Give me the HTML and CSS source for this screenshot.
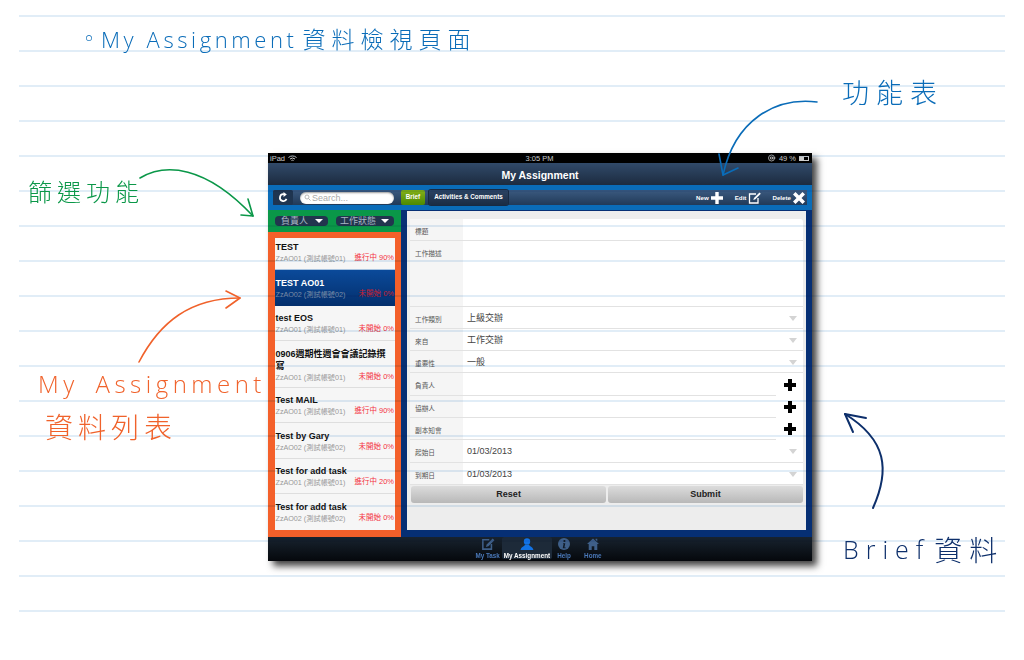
FILE: index.html
```html
<!DOCTYPE html>
<html lang="en">
<head>
    <meta charset="UTF-8">
    <meta name="viewport" content="width=device-width, initial-scale=1.0">
    <title>My Assignment</title>
    <link rel="stylesheet" href="styles.css">
</head>
<body>
<div class="sheet">
    <div class="ipad">
        <div class="status-bar">
            <div class="status-left">iPad
                <svg width="9" height="7" viewBox="0 0 18 14"><path d="M1 5a12 12 0 0 1 16 0M4 8a8 8 0 0 1 10 0M7 11a3.500 3.500 0 0 1 4 0" fill="none" stroke="#ccc" stroke-width="2"/></svg>
            </div>
            <div class="status-time">3:05 PM</div>
            <div class="status-right">
                <svg width="8" height="8" viewBox="0 0 16 16"><circle cx="7" cy="8" r="6" fill="none" stroke="#ccc" stroke-width="1.500"/><path d="M5 6h4v4H5zM9 8h6" fill="none" stroke="#ccc" stroke-width="1.500"/></svg>
                <span>49 %</span>
                <span class="battery"><span class="battery-fill"></span></span>
            </div>
        </div>
        <div class="title-bar">My Assignment</div>
        <div class="toolbar-wrap">
            <div class="toolbar">
                <div class="refresh-btn">
                    <svg width="11" height="11" viewBox="0 0 20 20"><path d="M15.500 12.500A6.200 6.200 0 1 1 11 4.100" fill="none" stroke="#fff" stroke-width="3.200"/><path d="M10 0l6 4.500-6 4.500z" fill="#fff"/></svg>
                </div>
                <div class="search-box">
                    <svg width="7" height="7" viewBox="0 0 14 14"><circle cx="6" cy="6" r="4" fill="none" stroke="#aaa" stroke-width="1.600"/><path d="M9 9l4 4" stroke="#aaa" stroke-width="1.800"/></svg>
                    <span>Search...</span>
                </div>
                <div class="tab-btn tab-green">Brief</div>
                <div class="tab-btn tab-dark">Activities &amp; Comments</div>
                <div class="actions">
                    <div class="action action-new">New
                        <svg width="12" height="12" viewBox="0 0 12 12"><path d="M4.300 0h3.400v4.300H12v3.400H7.700V12H4.300V7.700H0V4.300h4.300z" fill="#fff"/></svg>
                    </div>
                    <div class="action action-edit">Edit
                        <svg width="13" height="12" viewBox="0 0 13 12"><path d="M8 2H1.500v9h8.500V6" fill="none" stroke="#fff" stroke-width="1.300"/><path d="M11.500 0.500l1.300 1.300-5.500 5.500-2 .7.700-2z" fill="#fff"/></svg>
                    </div>
                    <div class="action">Delete
                        <svg width="12" height="12" viewBox="0 0 12 12"><path d="M2.500 0L6 3.500 9.500 0 12 2.500 8.500 6 12 9.500 9.500 12 6 8.500 2.500 12 0 9.500 3.500 6 0 2.500z" fill="#fff"/></svg>
                    </div>
                </div>
            </div>
        </div>
        <div class="main">
            <div class="left-col">
                <div class="filter-bar">
                    <div class="filter-pill filter-owner">負責人<i class="pill-arrow"></i></div>
                    <div class="filter-pill filter-state">工作狀態<i class="pill-arrow"></i></div>
                </div>
                <div class="list-frame">
                    <div class="task-list">
                        <div class="task task-first">
                            <div class="task-title">TEST</div>
                            <div class="task-meta"><span class="task-user">ZzAO01 (測試帳號01)</span><span class="task-state">進行中 90%</span></div>
                        </div>
                        <div class="task task-active">
                            <div class="task-title">TEST AO01</div>
                            <div class="task-meta"><span class="task-user">ZzAO02 (測試帳號02)</span><span class="task-state">未開始 0%</span></div>
                        </div>
                        <div class="task">
                            <div class="task-title">test EOS</div>
                            <div class="task-meta"><span class="task-user">ZzAO01 (測試帳號01)</span><span class="task-state">未開始 0%</span></div>
                        </div>
                        <div class="task task-tall">
                            <div class="task-title">0906週期性週會會議記錄撰寫</div>
                            <div class="task-meta"><span class="task-user">ZzAO01 (測試帳號01)</span><span class="task-state">未開始 0%</span></div>
                        </div>
                        <div class="task">
                            <div class="task-title">Test MAIL</div>
                            <div class="task-meta"><span class="task-user">ZzAO01 (測試帳號01)</span><span class="task-state">進行中 90%</span></div>
                        </div>
                        <div class="task">
                            <div class="task-title">Test by Gary</div>
                            <div class="task-meta"><span class="task-user">ZzAO02 (測試帳號02)</span><span class="task-state">未開始 0%</span></div>
                        </div>
                        <div class="task">
                            <div class="task-title">Test for add task</div>
                            <div class="task-meta"><span class="task-user">ZzAO01 (測試帳號01)</span><span class="task-state">進行中 20%</span></div>
                        </div>
                        <div class="task task-last">
                            <div class="task-title">Test for add task</div>
                            <div class="task-meta"><span class="task-user">ZzAO02 (測試帳號02)</span><span class="task-state">未開始 0%</span></div>
                        </div>
                    </div>
                </div>
            </div>
            <div class="detail-frame">
                <div class="detail">
                    <div class="form-card">
                        <div class="row row-title"><div class="row-label">標題</div><div class="row-value"></div></div>
                        <div class="row row-desc"><div class="row-label">工作描述</div><div class="row-value"></div></div>
                        <div class="row"><div class="row-label">工作類別</div><div class="row-value">上級交辦<i class="select-arrow"></i></div></div>
                        <div class="row"><div class="row-label">來自</div><div class="row-value">工作交辦<i class="select-arrow"></i></div></div>
                        <div class="row"><div class="row-label">重要性</div><div class="row-value">一般<i class="select-arrow"></i></div></div>
                        <div class="row row-person"><div class="row-label">負責人</div><div class="row-value"></div><div class="row-add"><i class="plus"></i></div></div>
                        <div class="row row-person"><div class="row-label">協辦人</div><div class="row-value"></div><div class="row-add"><i class="plus"></i></div></div>
                        <div class="row row-person"><div class="row-label">副本知會</div><div class="row-value"></div><div class="row-add"><i class="plus"></i></div></div>
                        <div class="row"><div class="row-label">起始日</div><div class="row-value">01/03/2013<i class="select-arrow"></i></div></div>
                        <div class="row"><div class="row-label">到期日</div><div class="row-value">01/03/2013<i class="select-arrow"></i></div></div>
                    </div>
                    <div class="form-buttons">
                        <div class="form-btn">Reset</div>
                        <div class="form-btn">Submit</div>
                    </div>
                </div>
            </div>
        </div>
        <div class="tab-bar">
            <div class="tab">
                <svg width="16" height="14" viewBox="0 0 16 14"><path d="M9.500 2H2v11h10V7" fill="none" stroke="#3f5f88" stroke-width="1.800"/><path d="M13.500 0.500l2 2-7 7-3 1 1-3z" fill="#3f5f88"/></svg>
                <span>My Task</span>
            </div>
            <div class="tab tab-on">
                <svg width="16" height="14" viewBox="0 0 16 14"><circle cx="8" cy="4" r="3.700" fill="#1273e6"/><path d="M5.500 7.500C5.500 10 1 10 .5 14h15c-.5-4-5-4-5-6.500z" fill="#1273e6"/></svg>
                <span>My Assignment</span>
            </div>
            <div class="tab">
                <svg width="14" height="14" viewBox="0 0 14 14"><circle cx="7" cy="7" r="7" fill="#3f5f88"/><circle cx="7.500" cy="3.500" r="1.300" fill="#101a26"/><path d="M6 6h2.500l-1 5H9v1H5.500l1-5H6z" fill="#101a26"/></svg>
                <span>Help</span>
            </div>
            <div class="tab">
                <svg width="14" height="14" viewBox="0 0 14 14"><path d="M7 .500L14 7h-2v7H8.500V9.500h-3V14H2V7H0zM10 1h2v3l-2-2z" fill="#3f5f88"/></svg>
                <span>Home</span>
            </div>
        </div>
    </div>

    <div class="rules"></div>

    <svg class="arrows" width="1024" height="660" viewBox="0 0 1024 660" fill="none" stroke-width="1.600" stroke-linecap="round" stroke-linejoin="round">
        <g stroke="#0a9748">
            <path d="M140 178C165 163 205 165 253 216"/>
            <path d="M248 199L253 216L241 215"/>
        </g>
        <g stroke="#f0622b">
            <path d="M139 362C160 322 190 298 240 298"/>
            <path d="M226 291L240 298L226 308"/>
        </g>
        <g stroke="#0a6cb8">
            <path d="M817 102C775 97 735 120 723 175"/>
            <path d="M719 154L723 175L738 168"/>
        </g>
        <g stroke="#0d2f6b" stroke-width="2">
            <path d="M873 508C890 470 887 440 845 414"/>
            <path d="M853 432L845 414L866 418"/>
        </g>
    </svg>

    <div class="note note-heading">
        <span class="note-bullet">◦</span><span class="note-latin">My Assignment</span><span class="note-cjk">資料檢視頁面</span>
    </div>
    <div class="note note-filter">篩選功能</div>
    <div class="note note-menu">功能表</div>
    <div class="note note-list-a">My Assignment</div>
    <div class="note note-list-b">資料列表</div>
    <div class="note note-brief"><span class="note-latin">Brief</span><span class="note-cjk">資料</span></div>
</div>
</body>
</html>
```

FILE: styles.css
```css
body {
    margin: 0;
    background: #fff;
    font-family: "Liberation Sans", "Noto Sans CJK TC", sans-serif;
}

.sheet {
    position: relative;
    width: 1024px;
    height: 660px;
    overflow: hidden;
    background: #fff;
}

/* notebook lines, they also show through the screenshot */
.rules {
    position: absolute;
    left: 19px;
    top: 15px;
    width: 986px;
    height: 597px;
    background: repeating-linear-gradient(to bottom, #e1edf7 0, #e1edf7 2px, #fff 2px, #fff 35px);
    mix-blend-mode: multiply;
    pointer-events: none;
}

.arrows {
    position: absolute;
    left: 0;
    top: 0;
}

/* hand written notes */
.note {
    position: absolute;
    font-family: "Open Sans", "Noto Sans CJK TC", sans-serif;
    font-weight: 300;
    white-space: nowrap;
    line-height: 1;
}

.note-cjk {
    font-family: "Noto Sans CJK TC", sans-serif;
    font-weight: 300;
}

.note-heading {
    left: 79px;
    top: 27px;
    color: #0a6cb8;
    font-size: 22px;
    display: flex;
    align-items: center;
}

.note-heading .note-bullet {
    width: 22px;
    font-size: 20px;
}

.note-heading .note-latin {
    letter-spacing: 3.600px;
    margin-right: 5px;
}

.note-heading .note-cjk {
    font-size: 23px;
    letter-spacing: 6px;
}

.note-filter {
    left: 28px;
    top: 179px;
    color: #0a9748;
    font-family: "Noto Sans CJK TC", sans-serif;
    font-size: 24px;
    letter-spacing: 5px;
}

.note-menu {
    left: 842px;
    top: 78px;
    color: #0a6cb8;
    font-family: "Noto Sans CJK TC", sans-serif;
    font-size: 27px;
    letter-spacing: 7px;
}

.note-list-a {
    left: 38px;
    top: 372px;
    color: #f0622b;
    font-size: 24px;
    letter-spacing: 4.500px;
    word-spacing: 6px;
}

.note-list-b {
    left: 45px;
    top: 412px;
    color: #f0622b;
    font-family: "Noto Sans CJK TC", sans-serif;
    font-size: 28px;
    letter-spacing: 5px;
}

.note-brief {
    left: 843px;
    top: 535px;
    color: #0d2f6b;
    font-size: 25px;
    display: flex;
    align-items: center;
}

.note-brief .note-latin {
    letter-spacing: 7px;
    margin-right: 4px;
}

.note-brief .note-cjk {
    font-size: 28px;
    letter-spacing: 7px;
}

/* the ipad screenshot */
.ipad {
    position: absolute;
    left: 268px;
    top: 153px;
    width: 544px;
    height: 408px;
    display: flex;
    flex-direction: column;
    background: #000;
    box-shadow: 5px 5px 7px rgba(0, 0, 0, 0.75);
    filter: blur(0.3px);
}

.status-bar {
    height: 10px;
    display: flex;
    justify-content: space-between;
    align-items: center;
    padding: 0 2px;
    color: #ccc;
    font-size: 7.500px;
    background: #000;
}

.status-left, .status-right {
    display: flex;
    align-items: center;
    gap: 3px;
}

.status-time {
    padding-left: 14px;
}

.battery {
    width: 10px;
    height: 5px;
    border: 1px solid #ccc;
    box-sizing: border-box;
    display: block;
    margin-right: 1px;
}

.battery-fill {
    display: block;
    width: 4px;
    height: 3px;
    background: #ccc;
}

.title-bar {
    height: 22px;
    line-height: 24px;
    text-align: center;
    color: #fff;
    font-size: 10.500px;
    font-weight: bold;
    background: linear-gradient(to bottom, #314a6a, #1c2b3f);
}

.toolbar-wrap {
    height: 25px;
    box-sizing: border-box;
    padding: 5px;
    background: #0a6cb8;
}

.toolbar {
    height: 15px;
    display: flex;
    align-items: center;
    background: linear-gradient(to bottom, #3b5a80, #213a58);
}

.refresh-btn {
    width: 20px;
    height: 15px;
    display: flex;
    align-items: center;
    justify-content: center;
    border-radius: 2px;
    background: #1f3550;
}

.search-box {
    width: 94px;
    height: 12px;
    box-sizing: border-box;
    margin-left: 7px;
    padding-left: 4px;
    display: flex;
    align-items: center;
    gap: 1px;
    border-radius: 6px;
    background: #fff;
    color: #aaa;
    font-size: 9px;
    box-shadow: inset 0 1px 2px rgba(0, 0, 0, 0.4);
}

.tab-btn {
    height: 14.500px;
    line-height: 14.500px;
    text-align: center;
    font-size: 6.300px;
    font-weight: bold;
    color: #fff;
    border-radius: 2px;
}

.tab-green {
    width: 24px;
    margin-left: 7px;
    background: linear-gradient(to bottom, #84b01a, #4d8a00);
}

.tab-dark {
    width: 79px;
    margin-left: 4px;
    background: linear-gradient(to bottom, #2c4464, #1a2c44);
    box-shadow: 0 0 0 1px #182a42;
}

.actions {
    margin-left: auto;
    display: flex;
    align-items: center;
    color: #fff;
    font-size: 6.200px;
    font-weight: bold;
}

.action {
    display: flex;
    align-items: center;
    gap: 2px;
    padding-right: 2px;
}

.action-new {
    margin-right: 10px;
}

.action-edit {
    margin-right: 9px;
}

.main {
    height: 327px;
    display: flex;
}

.left-col {
    width: 133px;
    display: flex;
    flex-direction: column;
}

.filter-bar {
    height: 22px;
    box-sizing: border-box;
    padding-top: 6px;
    padding-left: 7px;
    display: flex;
    background: #0a9748;
}

.filter-pill {
    height: 10px;
    line-height: 10px;
    box-sizing: border-box;
    padding-left: 6px;
    position: relative;
    border-radius: 4px;
    background: #22354e;
    color: #a9b6c4;
    font-size: 9px;
}

.filter-owner {
    width: 53px;
}

.filter-state {
    width: 58px;
    margin-left: 8px;
    padding-left: 4px;
}

.pill-arrow {
    position: absolute;
    right: 5px;
    top: 3px;
    border-left: 4px solid transparent;
    border-right: 4px solid transparent;
    border-top: 4px solid #fff;
}

.list-frame {
    flex: 1;
    box-sizing: border-box;
    padding: 6px 6px 7px 7px;
    background: #f4602a;
}

.task-list {
    height: 292px;
    background: #f6f6f6;
}

.task {
    height: 35.500px;
    box-sizing: border-box;
    padding: 6.500px 1px 0 0.500px;
    border-bottom: 1px solid #dedede;
    overflow: hidden;
}

.task-first {
    height: 32px;
    padding-top: 3px;
    border-bottom-color: #a9c4e0;
}

.task-tall {
    height: 46.500px;
}

.task-last {
    border-bottom: 0;
}

.task-active {
    background: linear-gradient(to bottom, #0b4a9a, #04306e);
    border-bottom-color: #04306e;
}

.task-title {
    font-size: 9px;
    font-weight: bold;
    line-height: 12px;
    color: #111;
}

.task-active .task-title {
    color: #fff;
}

.task-meta {
    display: flex;
    justify-content: space-between;
    align-items: flex-end;
    height: 12px;
}

.task-user {
    font-size: 7.200px;
    line-height: 12px;
    color: #999;
}

.task-state {
    font-size: 7.500px;
    line-height: 14px;
    color: #f4333f;
}

.task-active .task-user {
    color: #7d8fa8;
}

.task-active .task-state {
    color: #c8202f;
}

.detail-frame {
    flex: 1;
    box-sizing: border-box;
    padding: 1px 6px 7px 6px;
    background: #062f74;
}

.detail {
    height: 319px;
    box-sizing: border-box;
    padding: 8px 3px 0;
    background: #ededed;
}

.form-card {
    background: #fff;
    border-radius: 3px 3px 0 0;
}

.row {
    height: 22.300px;
    display: flex;
}

.row-title {
    height: 22px;
}

.row-desc {
    height: 65.500px;
}

.row-label {
    width: 53px;
    flex-shrink: 0;
    box-sizing: border-box;
    padding: 8px 0 0 5px;
    background: #f5f5f5;
    border-bottom: 1px solid #e2e2e2;
    color: #555;
    font-size: 6.700px;
    line-height: 10px;
}

.row-value {
    flex: 1;
    box-sizing: border-box;
    padding: 6px 0 0 4px;
    border-bottom: 1px solid #e2e2e2;
    color: #444;
    font-size: 9px;
    line-height: 11px;
    position: relative;
}

.row-add {
    width: 27px;
    display: flex;
    align-items: center;
    justify-content: center;
}

.select-arrow {
    position: absolute;
    right: 6px;
    top: 9px;
    border-left: 4px solid transparent;
    border-right: 4px solid transparent;
    border-top: 5px solid #d4d4d4;
}

.plus {
    display: block;
    width: 12px;
    height: 12px;
    background:
        linear-gradient(#000, #000) center / 12px 4px no-repeat,
        linear-gradient(#000, #000) center / 4px 12px no-repeat;
}

.form-buttons {
    display: flex;
    gap: 1.500px;
    padding: 1px 0 0 1px;
}

.form-btn {
    flex: 1;
    height: 17px;
    line-height: 17px;
    text-align: center;
    border-radius: 3px;
    background: linear-gradient(to bottom, #dcdcdc, #b8b8b8);
    color: #222;
    font-size: 9px;
    font-weight: bold;
}

.tab-bar {
    flex: 1;
    display: flex;
    justify-content: center;
    padding-right: 3px;
    background: linear-gradient(to bottom, #18232f, #05080c);
}

.tab {
    display: flex;
    flex-direction: column;
    align-items: center;
    gap: 2px;
    padding: 1px 2px 0;
    height: 21px;
    color: #4a78b8;
    font-size: 6.300px;
    font-weight: bold;
    line-height: 7px;
}

.tab:nth-child(3) {
    margin-left: 3px;
}

.tab:nth-child(4) {
    margin-left: 9px;
}

.tab-on {
    background: #1d2a39;
    border-radius: 2px;
    color: #fff;
}
```
